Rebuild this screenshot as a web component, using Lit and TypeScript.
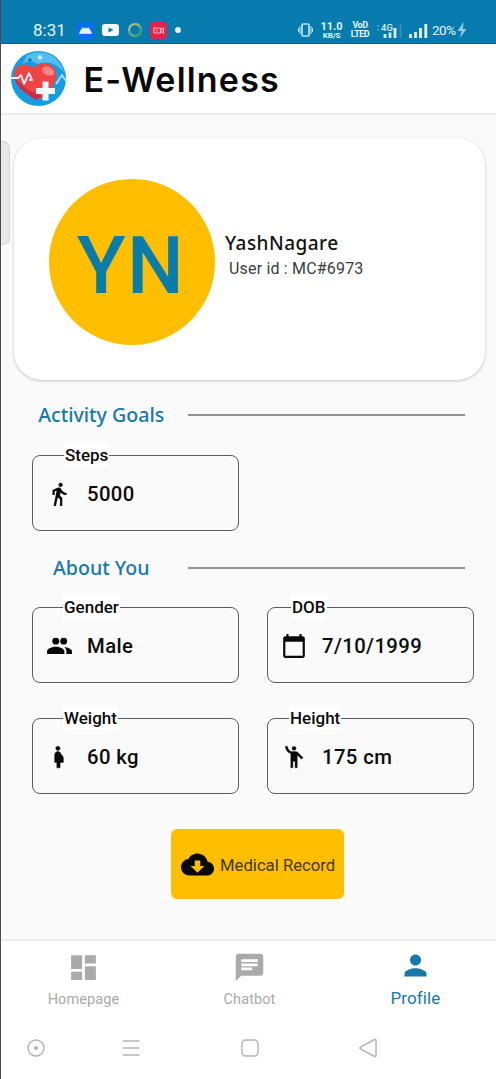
import { LitElement, html, css, svg } from 'lit';
import { customElement, property } from 'lit/decorators.js';

const walk = svg`<path d="M13.500 5.500c1.100 0 2-.9 2-2s-.9-2-2-2-2 .9-2 2 .9 2 2 2zM9.800 8.900L7 23h2.100l1.800-8 2.100 2v6h2v-7.500l-2.100-2 .600-3C14.800 12 16.800 13 19 13v-2c-1.900 0-3.500-1-4.300-2.400l-1-1.600c-.400-.600-1-1-1.700-1-.300 0-.500.100-.800.100L6 8.300V13h2V9.600l1.800-.700"/>`;
const people = svg`<circle cx="9" cy="7.500" r="3.200"/><circle cx="16.300" cy="7.500" r="3.200"/><path d="M9 12.800c-3 0-8 1.500-8 4.300V19.300h16v-2.200c0-2.800-5-4.300-8-4.300zM16.800 12.900c1.300 1 2 2.400 2 4.200v2.200H24v-2.200c0-2.500-4.200-3.900-7.200-4.200z"/>`;
const calendar = svg`<path d="M20 3h-1V1h-2v2H7V1H5v2H4c-1.100 0-2 .9-2 2v16c0 1.100.9 2 2 2h16c1.100 0 2-.9 2-2V5c0-1.100-.9-2-2-2zm0 18H4V8h16v13z"/>`;
const pregnant = svg`<path d="M9 4c0-1.110.89-2 2-2s2 .89 2 2-.89 2-2 2-2-.89-2-2zm7 9c-.010-1.340-.830-2.510-2-3 0-1.660-1.340-3-3-3s-3 1.340-3 3v7h2v5h3v-5h3v-4z" stroke="#080808" stroke-width=".4"/>`;
const waving = svg`<circle cx="12" cy="4" r="2"/><path d="M15.890 8.110C15.500 7.720 14.830 7 13.530 7h-2.540C8.240 6.990 6 4.750 6 2H4c0 3.160 2.110 5.840 5 6.710V22h2v-6h2v6h2V10.050L18.950 14l1.410-1.410-4.470-4.480z" stroke="#080808" stroke-width=".3"/>`;
const cloud = svg`<path d="M19.350 10.040C18.670 6.590 15.640 4 12 4 9.110 4 6.600 5.640 5.350 8.040 2.340 8.360 0 10.910 0 14c0 3.310 2.690 6 6 6h13c2.760 0 5-2.240 5-5 0-2.640-2.050-4.780-4.650-4.960zM17 13l-5 5-5-5h3V9h4v4h3z"/>`;
const dashboard = svg`<path d="M3 13h8V3H3v10zm0 8h8v-6H3v6zm10 0h8V11h-8v10zm0-18v6h8V3h-8z"/>`;
const chat = svg`<path d="M20 2H4c-1.100 0-1.990.9-1.990 2L2 22l4-4h14c1.100 0 2-.9 2-2V4c0-1.100-.9-2-2-2zM6 9h12v2H6V9zm8 5H6v-2h8v2zm4-6H6V6h12v2z"/>`;
const person = svg`<path d="M12 12c2.210 0 4-1.790 4-4s-1.790-4-4-4-4 1.790-4 4 1.790 4 4 4zm0 2c-2.670 0-8 1.340-8 4v2h16v-2c0-2.660-5.330-4-8-4z"/>`;

@customElement('status-bar')
class StatusBar extends LitElement {
  static styles = css`
    :host { display: flex; align-items: center; box-sizing: border-box; height: 44px; padding: 17px 29px 0 33px;
      background: #087bae; color: #e4f4fb; border-bottom: 1px solid #056492; font-family: Roboto, sans-serif; }
    svg { display: block; flex: none; }
    .time { width: 44px; font-size: 17px; letter-spacing: 0; }
    .icons { display: flex; align-items: center; flex: 1; }
    .droid { margin-right: 8px; }
    .tube { margin-right: 8px; }
    .ring { margin-right: 7px; }
    .rec { margin-right: 8px; }
    .system { display: flex; align-items: center; }
    .two { display: flex; flex-direction: column; align-items: center; font-weight: 700; white-space: nowrap; }
    .speed { width: 23px; margin: 0 8px 0 7px; font-size: 11px; line-height: 11px; }
    .speed small { font-size: 8px; line-height: 8px; letter-spacing: -.1px; }
    .volte { width: 18px; font-size: 9px; line-height: 9px; margin-right: 7px; letter-spacing: -.5px; }
    .cell { margin-right: 6px; }
    .bars { margin-right: 4px; }
    .pct { font-size: 13.500px; width: 25px; letter-spacing: -.5px; }
  `;
  render() {
    return html`
      <div class="time">8:31</div>
      <div class="icons">
        <svg class="droid" width="17" height="17" viewBox="0 0 17 17"><rect width="17" height="17" rx="4" fill="#0870ef"/><path d="M2.500 11.500q1-4.500 3.500-5.300h5q2.500.8 3.500 5.300zM5 5l1 2M12 5l-1 2" fill="#e8f4ff" stroke="#e8f4ff" stroke-width=".6"/></svg>
        <svg class="tube" width="17" height="12" viewBox="0 0 17 12"><rect width="17" height="12" rx="3" fill="#f4fbff"/><path d="M6.500 3.500l5 2.500-5 2.500z" fill="#087bae"/></svg>
        <svg class="ring" width="16" height="16" viewBox="0 0 16 16" fill="none"><circle cx="8" cy="8" r="6" stroke="#62a58c" stroke-width="2.500"/><path d="M2.200 9A6 6 0 0 1 12 3.500" stroke="#b3b98d" stroke-width="1.500"/><path d="M13.500 6A6 6 0 0 1 8 14" stroke="#3d9b6b" stroke-width="2"/></svg>
        <svg class="rec" width="17" height="17" viewBox="0 0 17 17"><rect width="17" height="17" rx="4" fill="#e52347"/><path d="M4 6h6.500v5H4zM10.500 8l3-2v5l-3-2M7 7.500v2" fill="none" stroke="#ffb0bd" stroke-width="1.200"/></svg>
        <svg width="6" height="6" viewBox="0 0 6 6"><circle cx="3" cy="3" r="2.900" fill="#edf8fc"/></svg>
      </div>
      <div class="system">
        <svg width="15" height="14" viewBox="0 0 15 14" fill="none" stroke="#b9e1ef" stroke-width="1.700"><rect x="4" y="1" width="7" height="12" rx="1"/><path d="M2 3v8M13 3v8M.5 5v4M14.500 5v4" stroke-width="1.100"/></svg>
        <div class="two speed"><span>11.0</span><small>KB/S</small></div>
        <div class="two volte"><span>VoD</span><span>LTED</span></div>
        <svg class="cell" width="27" height="17" viewBox="0 0 27 17"><text x="5" y="8.500" font-size="9.500" font-weight="500" fill="#d8eef7">4G</text><path d="M9 12v4M14 10.500v5.500M19 6v10" stroke="#d8eef7" stroke-width="2.800"/><path d="M24.500 2v14" stroke="#3494bd" stroke-width="1.800"/><path d="M1 4h2M1 8h2" stroke="#58a9ca" stroke-width="1.500"/></svg>
        <svg class="bars" width="19" height="15" viewBox="0 0 19 15"><path d="M1.500 11v4M6.500 9v6M11.500 5v10M16.800 1v14" stroke="#e6f5fb" stroke-width="2.800"/></svg>
        <div class="pct">20%</div>
        <svg width="10" height="16" viewBox="0 0 10 16"><path d="M6.500 0L.5 9h4L3 16l6.500-9H6z" fill="#8ac9e4"/></svg>
      </div>`;
  }
}

@customElement('brand-header')
class BrandHeader extends LitElement {
  static styles = css`
    :host { display: flex; align-items: center; box-sizing: border-box; height: 71px; padding: 0 0 1px 10px; gap: 16.500px; background: #fff; border-bottom: 2px solid #ececec; }
    h1 { margin: 0; padding-top: 3px; font: 600 34px/50px Inter, sans-serif; letter-spacing: 1.200px; color: #090909; white-space: nowrap; }
  `;
  render() {
    return html`
      <svg width="57" height="57" viewBox="0 0 57 57">
        <circle cx="28.500" cy="28.500" r="27.500" fill="#139de2"/>
        <path d="M17 5A26 26 0 0 1 54 22Q42 9 28 14Q18 8 12 15z" fill="#56bdf0"/>
        <path d="M26 50C14 43 5 35 4 24C4 15 15 11 23 18C30 10 45 12 46 23C47 35 38 45 26 50z" fill="#f04343"/>
        <path d="M26 50C14 43 5 35 4 27L10 33L18 40L32 46z" fill="#c92f42"/>
        <ellipse cx="38" cy="21" rx="6.500" ry="4.200" transform="rotate(24 38 21)" fill="#fa8587"/>
        <path d="M1 28h7l3-3 3 9 5-11 3 7h-3" fill="none" stroke="#f8edfa" stroke-width="1.900" stroke-linejoin="round"/>
        <path d="M46 34l6-9 4 6" fill="none" stroke="#a9e4fa" stroke-width="1.800"/>
        <path d="M32.500 31.500h6v6.500h6.500v6h-6.500v6.500h-6V44H26v-6h6.500z" fill="#fbf5ff"/>
        <path d="M30 5v5M27.500 7.500h5" stroke="#d8f5ff" stroke-width="1.400"/><path d="M20 8v4M18 10h4" stroke="#1c70a6" stroke-width="1.300"/>
      </svg>
      <h1>E-Wellness</h1>`;
  }
}

@customElement('profile-card')
class ProfileCard extends LitElement {
  static styles = css`
    :host { display: flex; align-items: center; box-sizing: border-box; width: 471px; height: 242px; margin-left: 14px; padding: 6px 0 0 35px; border-radius: 28px; background: #fff; box-shadow: 0 1px 3px #0000003a; font-family: Roboto, sans-serif; }
    .avatar { box-sizing: border-box; width: 166px; height: 166px; padding: 8px 2px 0 0; flex: none; border-radius: 50%; background: #ffbf00; color: #087cab; display: grid; place-items: center; font-size: 80px; font-weight: 500; line-height: 92px; letter-spacing: 1.500px; }
    .info { padding: 0 0 13px 10px; }
    .name { font: 500 19px/25px "Noto Sans", sans-serif; letter-spacing: .45px; color: #111; }
    .uid { padding-left: 4px; font-size: 16px; line-height: 25px; letter-spacing: .18px; color: #3c3c3c; }
  `;
  render() {
    return html`<div class="avatar"><span>YN</span></div>
      <div class="info"><div class="name">YashNagare</div><div class="uid">User id : MC#6973</div></div>`;
  }
}

@customElement('section-title')
class SectionTitle extends LitElement {
  static styles = css`
    :host { display: flex; align-items: center; height: 30px; padding: 0 31.500px 0 15px; }
    .text { width: 172.500px; text-align: center; font: 500 19.600px/30px "Noto Sans", sans-serif; color: #1779ab; white-space: nowrap; }
    .line { flex: 1; height: 2px; background: #929292; }
  `;
  @property() text = '';
  render() { return html`<div class="text">${this.text}</div><div class="line"></div>`; }
}

@customElement('info-field')
class InfoField extends LitElement {
  static styles = css`
    :host { position: relative; display: flex; align-items: center; box-sizing: border-box; height: 76px; padding: 1px 0 0 13px; border: 1px solid #5c5c5c; border-radius: 8px; font-family: Roboto, sans-serif; font-weight: 500; color: #0c0c0c; }
    .label { position: absolute; left: 30px; top: -13px; padding: 0 1px; background: #fff; font-size: 17px; line-height: 24px; }
    .label.steps { left: 31px; }
    .label.dob { left: 23px; }
    .label.height { left: 21px; }
    .value { padding-left: 15px; font-size: 20.300px; letter-spacing: .4px; line-height: 30px; }
    svg { display: block; width: 26px; height: 26px; fill: #080808; }
  `;
  @property() label = '';
  @property() value = '';
  @property({ attribute: false }) icon: unknown;
  render() {
    return html`<span class="label ${this.label.toLowerCase()}">${this.label}</span>
      <svg viewBox="0 0 24 24">${this.icon}</svg><span class="value">${this.value}</span>`;
  }
}

@customElement('bottom-nav')
class BottomNav extends LitElement {
  static styles = css`
    :host { display: block; height: 140px; box-sizing: border-box; background: #fff; border-top: 2px solid #ececec; font-family: Roboto, sans-serif; }
    .tabs { display: grid; grid-template-columns: repeat(3, 166px); height: 80px; padding-left: .5px; }
    .tab { display: flex; flex-direction: column; align-items: center; padding-top: 10px; color: #aaa; font-size: 14.500px; }
    .tab svg { width: 33px; height: 33px; fill: currentColor; }
    .tab span { line-height: 20px; padding-top: 6px; letter-spacing: .1px; }
    .tab.on { color: #1679aa; font-size: 17px; padding-top: 8px; }
    .keys { display: flex; align-items: center; padding: 17px 0 0 26px; }
    .keys svg { width: 20px; height: 20px; fill: none; stroke: #b5b5b5; stroke-width: 1.500; }
    .k1 { margin-right: 75px; } .k2 { margin-right: 99px; } .k3 { margin-right: 98px; }
  `;
  render() {
    return html`
      <div class="tabs">
        <div class="tab"><svg viewBox="0 0 24 24">${dashboard}</svg><span>Homepage</span></div>
        <div class="tab"><svg viewBox="0 0 24 24">${chat}</svg><span>Chatbot</span></div>
        <div class="tab on"><svg viewBox="0 0 24 24">${person}</svg><span>Profile</span></div>
      </div>
      <div class="keys">
        <svg class="k1" viewBox="0 0 20 20"><circle cx="10" cy="10" r="8"/><circle cx="10" cy="10" r="1.200" fill="#999"/></svg>
        <svg class="k2" viewBox="0 0 20 20"><path d="M1.500 3h17M1.500 10h17M1.500 17h17"/></svg>
        <svg class="k3" viewBox="0 0 20 20"><rect x="2" y="2" width="16" height="16" rx="3.500"/></svg>
        <svg viewBox="0 0 20 20"><path d="M16.500 1.500L2.500 9.200q-1 .8 0 1.600L16.500 18.500q1.500.5 1.500-1V2.500q0-1.500-1.500-1z"/></svg>
      </div>`;
  }
}

@customElement('app-root')
class AppRoot extends LitElement {
  static styles = css`
    :host { display: flex; flex-direction: column; position: relative; box-sizing: border-box; width: 496px; height: 1079px; overflow: hidden; background: #fafafa; font-family: Roboto, sans-serif; }
    .edge { position: absolute; left: 0; top: 0; width: 1px; height: 100%; background: #4b4b4d; }
    .handle { position: absolute; left: 1px; top: 141px; width: 9px; height: 104px; box-sizing: border-box; background: #e8e8e8; border: 1px solid #d5d5d5; border-left: 0; border-radius: 0 7px 7px 0; }
    main { flex: 1; padding-top: 23px; }
    .goals { margin-top: 20px; }
    .about { margin-top: 22px; }
    .grid { display: grid; grid-template-columns: 207px 207px; gap: 35px 28px; padding: 25px 0 0 32px; }
    .about + .grid { padding-top: 24px; }
    .action { display: flex; justify-content: center; padding: 35px 0 0 19px; }
    .button { display: flex; align-items: center; box-sizing: border-box; width: 173px; height: 70px; padding: 1px 0 0 10px; gap: 6px; border: 0; border-radius: 6px; background: #ffbf00; font: 400 16.700px/24px Roboto, sans-serif; color: #44380f; white-space: nowrap; }
    .button span { padding-top: 2px; }
    .button svg { width: 33px; height: 33px; fill: #080808; flex: none; }
  `;
  render() {
    return html`
      <status-bar></status-bar>
      <brand-header></brand-header>
      <main>
        <profile-card></profile-card>
        <section-title class="goals" text="Activity Goals"></section-title>
        <div class="grid"><info-field label="Steps" value="5000" .icon=${walk}></info-field></div>
        <section-title class="about" text="About You"></section-title>
        <div class="grid">
          <info-field label="Gender" value="Male" .icon=${people}></info-field>
          <info-field label="DOB" value="7/10/1999" .icon=${calendar}></info-field>
          <info-field label="Weight" value="60 kg" .icon=${pregnant}></info-field>
          <info-field label="Height" value="175 cm" .icon=${waving}></info-field>
        </div>
        <div class="action"><button class="button"><svg viewBox="0 0 24 24">${cloud}</svg><span>Medical Record</span></button></div>
      </main>
      <bottom-nav></bottom-nav>
      <div class="edge"></div>
      <div class="handle"></div>`;
  }
}
